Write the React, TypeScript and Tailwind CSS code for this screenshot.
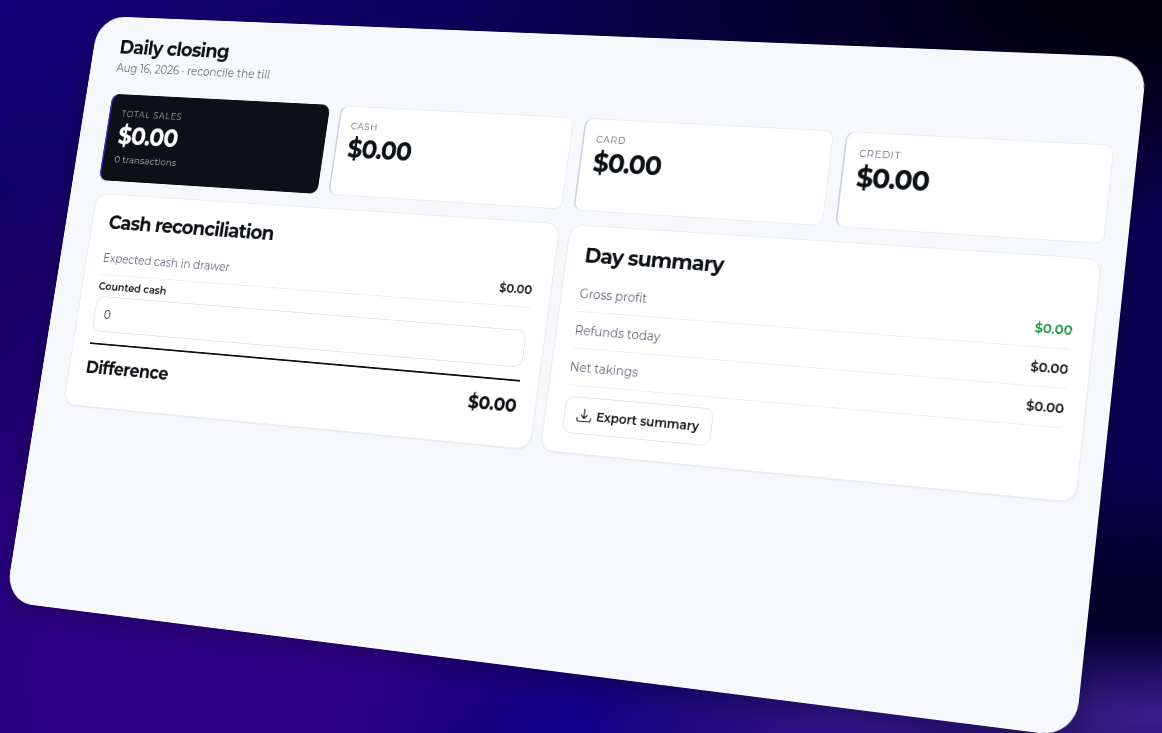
import type { ReactNode } from "react";

function StatCard({ label, value, note, dark = false }: { label: string; value: string; note?: string; dark?: boolean }) {
  const tone = dark
    ? "border-[#0d1014] border-l-[#4326c4] bg-[#0d1014] text-white"
    : "border-[#e9ebf1] border-l-[#cfd3e2] bg-white text-[#0d1014]";
  return (
    <div className={`rounded-[10px] border border-l-2 px-[15px] pt-3.5 pb-[18px] ${tone}`}>
      <div className={dark ? "text-[11px] leading-[18px] tracking-[0.08em] text-[#a3a6ad]" : "text-[11px] leading-[18px] tracking-[0.08em] text-[#646978]"}>
        {label}
      </div>
      <div className="mt-px text-3xl leading-9 font-bold tracking-[-0.04em]">{value}</div>
      {note && <div className="mt-0.5 text-xs leading-[17px] text-[#b4b6bb]">{note}</div>}
    </div>
  );
}

function Panel({ title, children }: { title: string; children: ReactNode }) {
  return (
    <section className="rounded-2xl border border-[#e9ebf1] bg-white px-[22px] pt-[19px] pb-[22px] shadow-[0_1px_2px_rgba(15,20,40,0.06)]">
      <h2 className="mb-[9px] text-2xl leading-[29px] font-bold tracking-[-0.04em]">{title}</h2>
      {children}
    </section>
  );
}

function Row({ label, value, positive = false }: { label: string; value: string; positive?: boolean }) {
  return (
    <div className="flex justify-between border-b border-[#e9ebf1] pt-[11px] pb-[9px] text-sm leading-[21px]">
      <span className="text-[#646978]">{label}</span>
      <span className={positive ? "font-semibold text-[#16913a]" : "font-semibold"}>{value}</span>
    </div>
  );
}

function ExportIcon() {
  return (
    <svg viewBox="0 0 18 18" className="size-[18px]" fill="none" stroke="currentColor" strokeWidth="1.2" strokeLinecap="round" strokeLinejoin="round" aria-hidden="true">
      <path d="M9 1.5v10.5M5.5 8.5 9 12l3.5-3.5M1 11.5v2.2a1.8 1.8 0 0 0 1.8 1.8h12.4a1.8 1.8 0 0 0 1.8-1.8v-2.2" />
    </svg>
  );
}

export default function App() {
  return (
    <div className="flex min-h-screen items-center justify-center overflow-hidden bg-[#0b0052] bg-[radial-gradient(ellipse_30%_12%_at_100%_98%,#38208c_0%,transparent_100%),radial-gradient(ellipse_55%_30%_at_100%_0%,#02000f_20%,transparent_100%),radial-gradient(ellipse_14%_20%_at_98%_83%,#04002a_20%,transparent_100%),radial-gradient(ellipse_22%_22%_at_72%_102%,#2c1288_20%,transparent_100%),radial-gradient(ellipse_22%_26%_at_50%_104%,#14008a_20%,transparent_100%),radial-gradient(ellipse_42%_75%_at_18%_92%,#2d0086_35%,transparent_100%),radial-gradient(ellipse_50%_50%_at_0%_0%,#14007a_0%,transparent_100%)] font-['Montserrat','Inter',sans-serif] text-[#0d1014]">
      <main className="aspect-[30/17] w-[110%] shrink-0 rounded-[36px] bg-[#f7f8fc] pt-[22px] pr-[25px] pl-9 shadow-[0_10px_28px_rgba(0,0,0,0.25)] [transform:translate(-37px,-21px)_perspective(2780px)_rotateX(10.6deg)_rotateY(-19.8deg)_rotateZ(8.1deg)_scale(0.885)]">
        <header className="mb-[22px]">
          <h1 className="text-2xl leading-[31px] font-bold tracking-[-0.035em]">Daily closing</h1>
          <p className="text-sm leading-[22px] text-[#646978]">Aug 16, 2026 · reconcile the till</p>
        </header>
        <div className="mb-4 grid grid-cols-4 gap-3.5">
          <StatCard label="TOTAL SALES" value="$0.00" note="0 transactions" dark />
          <StatCard label="CASH" value="$0.00" />
          <StatCard label="CARD" value="$0.00" />
          <StatCard label="CREDIT" value="$0.00" />
        </div>
        <div className="grid grid-cols-2 gap-3">
          <Panel title="Cash reconciliation">
            <Row label="Expected cash in drawer" value="$0.00" />
            <label htmlFor="counted" className="mt-1 mb-1 block text-[13px] leading-[18px] font-semibold">
              Counted cash
            </label>
            <input
              id="counted"
              type="text"
              inputMode="decimal"
              defaultValue="0"
              className="block h-[43px] w-full rounded-[10px] border border-[#dfe2ea] bg-white px-3 text-sm"
            />
            <div className="mt-3.5 flex justify-between border-t-2 border-[#0d1014] pt-3 text-[21px] leading-[31px] font-bold tracking-[-0.02em]">
              <span>Difference</span>
              <span>$0.00</span>
            </div>
          </Panel>
          <Panel title="Day summary">
            <Row label="Gross profit" value="$0.00" positive />
            <Row label="Refunds today" value="$0.00" />
            <Row label="Net takings" value="$0.00" />
            <button type="button" className="mt-3 flex h-[42px] items-center gap-1.5 rounded-[10px] border border-[#dfe2ea] bg-white px-3.5 text-sm font-semibold">
              <ExportIcon />
              Export summary
            </button>
          </Panel>
        </div>
      </main>
    </div>
  );
}
